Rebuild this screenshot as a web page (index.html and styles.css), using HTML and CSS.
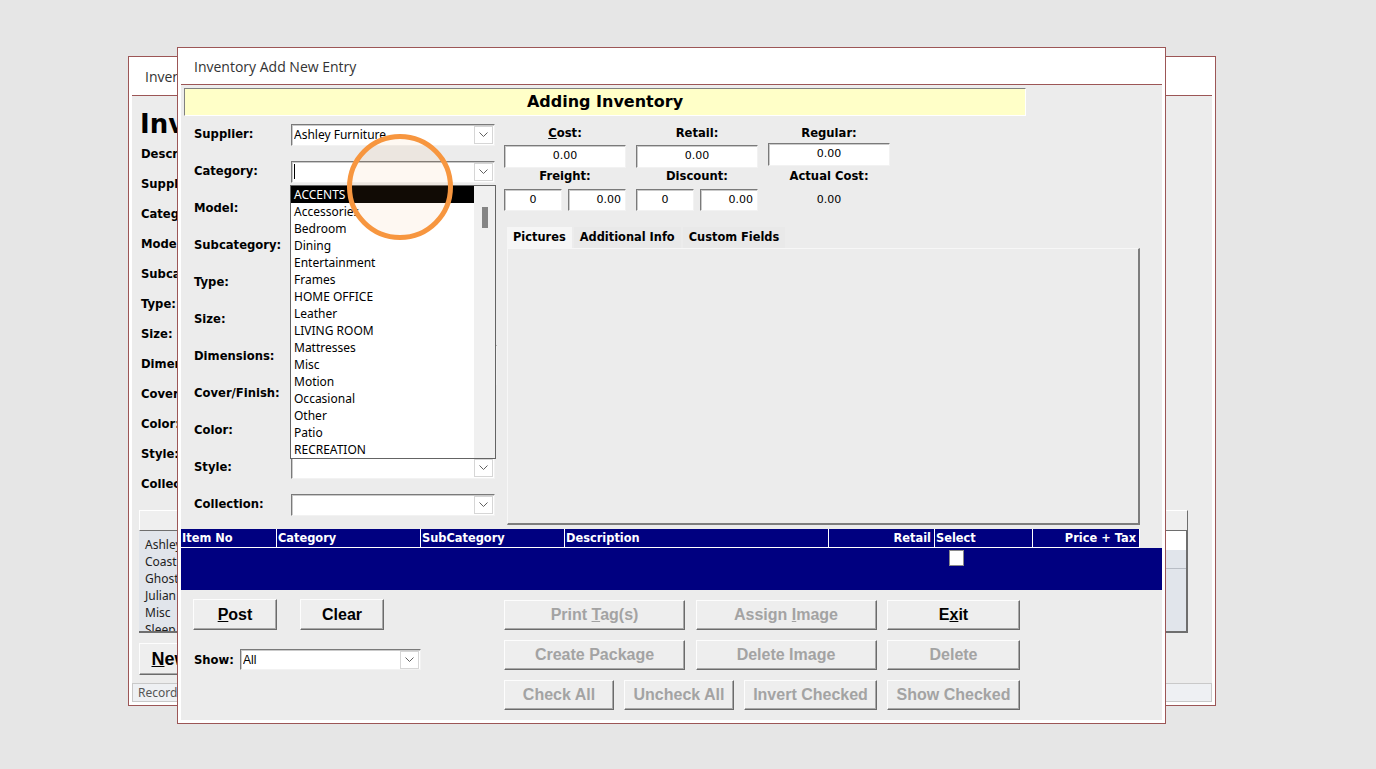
FILE: index.html
```html
<!DOCTYPE html>
<html>
<head>
    <meta charset="UTF-8">
    <link rel="stylesheet" href="styles.css">
</head>
<body>
    <div class="desktop">

        <!-- Inventory window (behind) -->
        <div class="window back">
            <div class="titlebar">Inventory</div>
            <div class="win-body">
                <div class="back-heading">Inventory</div>
                <div class="back-labels">
                    <div>Description:</div>
                    <div>Supplier:</div>
                    <div>Category:</div>
                    <div>Model:</div>
                    <div>Subcategory:</div>
                    <div>Type:</div>
                    <div>Size:</div>
                    <div>Dimensions:</div>
                    <div>Cover/Finish:</div>
                    <div>Color:</div>
                    <div>Style:</div>
                    <div>Collection:</div>
                </div>
                <div class="back-list-head"></div>
                <div class="back-list">
                    <div class="names">
                        <div>Ashley Furniture</div>
                        <div>Coaster</div>
                        <div>Ghost</div>
                        <div>Julian</div>
                        <div>Misc</div>
                        <div>Sleep</div>
                    </div>
                    <div class="cols">
                        <div class="first"></div>
                        <div class="second"></div>
                    </div>
                </div>
                <button class="btn new"><u>N</u>ew</button>
                <div class="statusbar">Record: 1 of 6</div>
            </div>
        </div>

        <!-- Add new entry dialog -->
        <div class="window front">
            <div class="titlebar">Inventory Add New Entry</div>
            <div class="win-body">
                <div class="banner">Adding Inventory</div>

                <div class="main">
                    <div class="form">
                        <label>Supplier:</label>
                        <div class="combo"><span class="value">Ashley Furniture</span><span class="drop"><svg width="9" height="5" viewBox="0 0 9 5"><path d="M0.5 0.5L4.5 4.5L8.5 0.5" fill="none" stroke="#606060"/></svg></span></div>

                        <label>Category:</label>
                        <div class="combo"><span class="value"><span class="caret"></span></span><span class="drop"><svg width="9" height="5" viewBox="0 0 9 5"><path d="M0.5 0.5L4.5 4.5L8.5 0.5" fill="none" stroke="#606060"/></svg></span></div>

                        <label>Model:</label>
                        <div class="combo"><span class="value"></span></div>

                        <label>Subcategory:</label>
                        <div class="combo"><span class="value"></span><span class="drop"><svg width="9" height="5" viewBox="0 0 9 5"><path d="M0.5 0.5L4.5 4.5L8.5 0.5" fill="none" stroke="#606060"/></svg></span></div>

                        <label>Type:</label>
                        <div class="combo"><span class="value"></span><span class="drop"><svg width="9" height="5" viewBox="0 0 9 5"><path d="M0.5 0.5L4.5 4.5L8.5 0.5" fill="none" stroke="#606060"/></svg></span></div>

                        <label>Size:</label>
                        <div class="combo"><span class="value"></span></div>

                        <label>Dimensions:</label>
                        <div class="combo tall"></div>

                        <label>Cover/Finish:</label>
                        <div class="combo"><span class="value"></span><span class="drop"><svg width="9" height="5" viewBox="0 0 9 5"><path d="M0.5 0.5L4.5 4.5L8.5 0.5" fill="none" stroke="#606060"/></svg></span></div>

                        <label>Color:</label>
                        <div class="combo"><span class="value"></span><span class="drop"><svg width="9" height="5" viewBox="0 0 9 5"><path d="M0.5 0.5L4.5 4.5L8.5 0.5" fill="none" stroke="#606060"/></svg></span></div>

                        <label>Style:</label>
                        <div class="combo"><span class="value"></span><span class="drop"><svg width="9" height="5" viewBox="0 0 9 5"><path d="M0.5 0.5L4.5 4.5L8.5 0.5" fill="none" stroke="#606060"/></svg></span></div>

                        <label>Collection:</label>
                        <div class="combo"><span class="value"></span><span class="drop"><svg width="9" height="5" viewBox="0 0 9 5"><path d="M0.5 0.5L4.5 4.5L8.5 0.5" fill="none" stroke="#606060"/></svg></span></div>
                    </div>

                    <div class="side">
                        <div class="prices">
                            <div class="plabel"><u>C</u>ost:</div>
                            <div class="plabel">Retail:</div>
                            <div class="plabel">Regular:</div>
                            <div class="box">0.00</div>
                            <div class="box">0.00</div>
                            <div class="box raised">0.00</div>
                            <div class="plabel">Freight:</div>
                            <div class="plabel">Discount:</div>
                            <div class="plabel">Actual Cost:</div>
                            <div class="pair">
                                <div class="box">0</div>
                                <div class="box right">0.00</div>
                            </div>
                            <div class="pair">
                                <div class="box">0</div>
                                <div class="box right">0.00</div>
                            </div>
                            <div class="actual">0.00</div>
                        </div>

                        <div class="tabs">
                            <div class="tab active">Pictures</div>
                            <div class="tab">Additional Info</div>
                            <div class="tab">Custom Fields</div>
                        </div>
                        <div class="tab-panel"></div>
                    </div>
                </div>

                <div class="grid-head">
                    <div>Item No</div>
                    <div>Category</div>
                    <div>SubCategory</div>
                    <div>Description</div>
                    <div class="num">Retail</div>
                    <div>Select</div>
                    <div class="num">Price + Tax</div>
                </div>
                <div class="grid-row">
                    <div></div><div></div><div></div><div></div><div></div>
                    <div><span class="check"></span></div>
                    <div></div>
                </div>

                <div class="actions">
                    <div class="left-actions">
                        <div class="btn-pair">
                            <button class="btn tall"><u>P</u>ost</button>
                            <button class="btn tall">Clear</button>
                        </div>
                        <div class="show">
                            <label>Show:</label>
                            <div class="combo show-combo"><span class="value">All</span><span class="drop"><svg width="9" height="5" viewBox="0 0 9 5"><path d="M0.5 0.5L4.5 4.5L8.5 0.5" fill="none" stroke="#606060"/></svg></span></div>
                        </div>
                    </div>
                    <div class="right-actions">
                        <div class="btn-row">
                            <button class="btn" disabled>Print <u>T</u>ag(s)</button>
                            <button class="btn" disabled>Assign <u>I</u>mage</button>
                            <button class="btn">E<u>x</u>it</button>
                        </div>
                        <div class="btn-row">
                            <button class="btn" disabled>Create Package</button>
                            <button class="btn" disabled>Delete Image</button>
                            <button class="btn" disabled>Delete</button>
                        </div>
                        <div class="btn-row four">
                            <button class="btn" disabled>Check All</button>
                            <button class="btn" disabled>Uncheck All</button>
                            <button class="btn" disabled>Invert Checked</button>
                            <button class="btn" disabled>Show Checked</button>
                        </div>
                    </div>
                </div>

                <!-- open category list -->
                <div class="dropdown">
                    <ul>
                        <li class="selected">ACCENTS</li>
                        <li>Accessories</li>
                        <li>Bedroom</li>
                        <li>Dining</li>
                        <li>Entertainment</li>
                        <li>Frames</li>
                        <li>HOME OFFICE</li>
                        <li>Leather</li>
                        <li>LIVING ROOM</li>
                        <li>Mattresses</li>
                        <li>Misc</li>
                        <li>Motion</li>
                        <li>Occasional</li>
                        <li>Other</li>
                        <li>Patio</li>
                        <li>RECREATION</li>
                    </ul>
                    <div class="scrollbar"><div class="thumb"></div></div>
                </div>

                <div class="highlight"></div>
            </div>
        </div>

    </div>
</body>
</html>
```

FILE: styles.css
```css
* {
    margin: 0;
    padding: 0;
    box-sizing: border-box;
}

body {
    background: #e6e6e6;
    font-family: "DejaVu Sans", Verdana, sans-serif;
    font-size: 11px;
    color: #000;
    overflow: hidden;
}

.desktop {
    position: relative;
    width: 1376px;
    height: 769px;
}

/* windows */
.window {
    position: absolute;
    display: flex;
    flex-direction: column;
    background: #fff;
    border: 1px solid #9c5656;
    padding: 0 3px 3px;
    overflow: hidden;
}

.window.back {
    left: 128px;
    top: 56px;
    width: 1088px;
    height: 650px;
}

.window.front {
    left: 177px;
    top: 47px;
    width: 989px;
    height: 677px;
}

.titlebar {
    flex-shrink: 0;
    display: flex;
    align-items: center;
    padding-left: 13px;
    border-bottom: 1px solid #9c5656;
    font-family: "Open Sans", "Noto Sans", sans-serif;
    font-size: 14px;
    color: #333;
}

.back .titlebar {
    height: 39px;
}

.front .titlebar {
    height: 37px;
}

.win-body {
    flex: 1;
    position: relative;
    background: #ececec;
}

/* background window content */
.back-heading {
    margin: 14px 0 0 8px;
    font-weight: bold;
    font-size: 26px;
    line-height: 29px;
}

.back-labels {
    padding-left: 9px;
    font-weight: bold;
    font-size: 11.6px;
}

.back-labels div {
    height: 30px;
    line-height: 30px;
}

.back-list-head {
    margin: 11px 24px 0 7px;
    height: 21px;
    background: #efefef;
    border: 1px solid;
    border-color: #fff #6e6e6e #6e6e6e #fff;
}

.back-list {
    display: flex;
    margin: 0 24px 0 7px;
    height: 102px;
    background: #e1e5eb;
    border-right: 2px solid #6e6e6e;
    border-bottom: 2px solid #6e6e6e;
    font-family: "Noto Sans", sans-serif;
    font-size: 12px;
    color: #222;
}

.back-list .names {
    flex: 1;
    padding: 5px 0 0 6px;
    line-height: 17px;
    overflow: hidden;
}

.back-list .cols {
    width: 60px;
}

.back-list .first {
    height: 19px;
    background: #fff;
}

.back-list .second {
    height: 19px;
    border-bottom: 1px solid #b8bdc5;
}

.btn.new {
    display: block;
    width: 62px;
    height: 32px;
    margin: 10px 0 0 7px;
    font-size: 18px;
}

.statusbar {
    height: 19px;
    margin-top: 8px;
    padding-left: 5px;
    background: #eef0f3;
    border: 1px solid #c9c9c9;
    font-family: "Noto Sans", sans-serif;
    font-size: 12px;
    line-height: 17px;
    color: #555;
}

/* dialog */
.banner {
    width: 842px;
    height: 28px;
    margin: 3px 0 0 3px;
    background: #ffffc8;
    border: 1px solid;
    border-color: #808080 #fff #fff #808080;
    font-weight: bold;
    font-size: 16px;
    line-height: 26px;
    text-align: center;
}

.main {
    display: flex;
    align-items: flex-start;
    padding-left: 13px;
}

.form {
    display: grid;
    grid-template-columns: 97px 204px;
    grid-auto-rows: 37px;
    align-items: center;
}

.form label {
    font-weight: bold;
    font-size: 11.6px;
    padding-bottom: 1px;
}

.combo {
    display: flex;
    align-items: center;
    height: 22px;
    padding-left: 2px;
    background: #fff;
    border: 1px solid;
    border-color: #7a7a7a #f2f2f2 #f2f2f2 #7a7a7a;
    box-shadow: inset 1px 1px 0 #cacaca;
    font-family: "Noto Sans", sans-serif;
    font-size: 12px;
}

.combo .value {
    flex: 1;
    display: flex;
    align-items: center;
    height: 100%;
    white-space: nowrap;
    overflow: hidden;
}

.combo.tall {
    align-self: start;
    width: 206px;
    height: 40px;
    margin-top: 7px;
}

.caret {
    width: 1px;
    height: 15px;
    background: #000;
}

.drop {
    display: flex;
    align-items: center;
    justify-content: center;
    width: 19px;
    height: 18px;
    margin-right: 1px;
    background: #fff;
    border: 1px solid #d6d6d6;
}

.side {
    width: 636px;
    margin-left: 9px;
}

.prices {
    display: grid;
    grid-template-columns: repeat(3, 122px);
    grid-template-rows: 16px 27px 16px 27px;
    column-gap: 10px;
    margin-top: 9px;
    text-align: center;
}

.plabel {
    font-weight: bold;
    font-size: 11.6px;
    line-height: 16px;
}

.box {
    align-self: end;
    height: 23px;
    line-height: 20px;
    background: #fff;
    border: 1px solid;
    border-color: #7a7a7a #f2f2f2 #f2f2f2 #7a7a7a;
    box-shadow: inset 1px 1px 0 #cacaca;
}

.box.raised {
    align-self: start;
    margin-top: 2px;
}

.pair {
    display: grid;
    grid-template-columns: 1fr 1fr;
    gap: 6px;
    align-self: end;
}

.pair .box {
    height: 22px;
}

.box.right {
    text-align: right;
    padding-right: 4px;
}

.actual {
    align-self: end;
    line-height: 22px;
}

.tabs {
    display: flex;
    gap: 2px;
    height: 21px;
    margin: 16px 0 0 3px;
}

.tab {
    padding: 0 6px;
    background: #e9e9e9;
    font-weight: bold;
    font-size: 11.4px;
    line-height: 20px;
}

.tab.active {
    background: #f6f6f6;
}

.tab-panel {
    width: 633px;
    height: 277px;
    margin-left: 3px;
    background: #ececec;
    border-style: solid;
    border-width: 1px 2px 2px 1px;
    border-color: #f7f7f7 #7d7d7d #7d7d7d #f7f7f7;
}

/* items grid */
.grid-head,
.grid-row {
    display: grid;
    grid-template-columns: 96px 144px 144px 264px 106px 98px 107px;
}

.grid-head {
    width: 959px;
    margin-top: 4px;
    background: #000080;
    color: #fff;
    font-weight: bold;
    font-size: 11.4px;
}

.grid-head div {
    height: 19px;
    padding: 0 3px 0 1px;
    line-height: 18px;
    white-space: nowrap;
    border-right: 1px solid #fff;
    border-bottom: 1px solid #fff;
}

.grid-head .num {
    text-align: right;
}

.grid-row {
    height: 42px;
    background: #000080;
}

.check {
    display: block;
    width: 15px;
    height: 16px;
    margin: 2px 0 0 14px;
    background: #fff;
    border: 1px solid #8a8a8a;
}

/* buttons */
.actions {
    display: flex;
    margin-top: 9px;
    padding-left: 12px;
}

.left-actions {
    width: 311px;
}

.btn-pair {
    display: flex;
    gap: 23px;
}

.show {
    display: flex;
    align-items: center;
    margin-top: 19px;
}

.show label {
    width: 47px;
    padding-left: 1px;
    font-weight: bold;
    font-size: 11.6px;
}

.show-combo {
    width: 181px;
    height: 21px;
    font-family: "Liberation Sans", Arial, sans-serif;
}

.right-actions {
    display: flex;
    flex-direction: column;
    gap: 10px;
    width: 516px;
    margin-top: 1px;
}

.btn-row {
    display: grid;
    grid-template-columns: 181px 181px 133px;
    justify-content: space-between;
}

.btn-row.four {
    grid-template-columns: 110px 110px 133px 133px;
}

.btn {
    height: 30px;
    font-family: "Liberation Sans", Arial, sans-serif;
    font-size: 16px;
    font-weight: bold;
    color: #000;
    background: #eeeeee;
    border: 1px solid;
    border-color: #fdfdfd #6b6b6b #6b6b6b #fdfdfd;
    box-shadow: inset -1px -1px 0 #a8a8a8;
}

.btn:disabled {
    color: #a3a3a3;
}

.btn.tall {
    width: 84px;
    height: 31px;
}

/* open combo list */
.dropdown {
    position: absolute;
    left: 109px;
    top: 100px;
    width: 206px;
    height: 274px;
    display: flex;
    background: #fff;
    border: 1px solid #646464;
    font-family: "Noto Sans", sans-serif;
    font-size: 12px;
}

.dropdown ul {
    list-style: none;
    width: 183px;
}

.dropdown li {
    height: 17px;
    padding-left: 3px;
    line-height: 17px;
    white-space: nowrap;
}

.dropdown li.selected {
    background: #000;
    color: #fff;
}

.scrollbar {
    flex: 1;
    padding: 21px 0 0 8px;
    background: #f0f0f0;
}

.thumb {
    width: 6px;
    height: 21px;
    background: #858585;
}

/* annotation circle */
.highlight {
    position: absolute;
    left: 166px;
    top: 49px;
    width: 106px;
    height: 106px;
    border: 5px solid #f7963f;
    border-radius: 50%;
    background: rgba(247, 150, 70, 0.07);
}
```
